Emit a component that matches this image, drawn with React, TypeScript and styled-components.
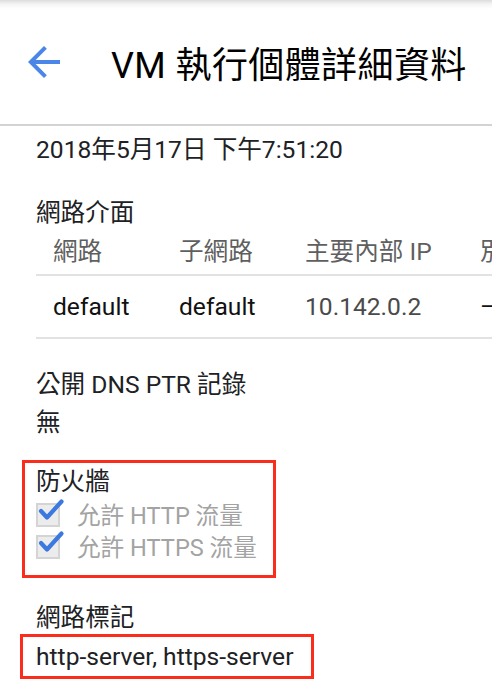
import React from "react";
import styled, { createGlobalStyle } from "styled-components";

const Global = createGlobalStyle`
  html, body { margin: 0; padding: 0; background: #fff; }
  body {
    font-family: Roboto, "Noto Sans CJK TC", "Noto Sans", sans-serif;
    color: #202124;
    overflow: hidden;
    width: 492px;
  }
`;

const Page = styled.div`
  width: 492px;
  height: 688px;
  overflow: hidden;
  background: #fff;
`;

const Header = styled.header`
  height: 124px;
  display: flex;
  align-items: center;
  border-bottom: 2px solid #d3d3d3;
  background: linear-gradient(to bottom, #dcdcdc 0px, #f4f4f4 4px, #ffffff 9px);
`;

const BackButton = styled.button`
  width: 48px;
  height: 48px;
  margin-left: 20px;
  padding: 0;
  border: none;
  background: none;
  display: flex;
  align-items: center;
  justify-content: center;
  color: #4a86e8;
`;

const Title = styled.h1`
  margin: 0 0 0 43px;
  font-size: 36px;
  font-weight: 400;
  color: #000;
  white-space: nowrap;
  letter-spacing: 0.4px;
`;

const Content = styled.main`
  padding: 8px 0 0 36px;
`;

const Text = styled.div<{ $mt?: number; $color?: string }>`
  font-size: 24.6px;
  line-height: 32px;
  margin-top: ${(p) => p.$mt ?? 0}px;
  color: ${(p) => p.$color ?? "#202124"};
  white-space: nowrap;
`;

const Table = styled.div`
  display: grid;
  grid-template-columns: 126px 126px 175px 200px;
  overflow: hidden;
  width: 456px;
`;

const HeadCell = styled.div`
  height: 45px;
  display: flex;
  align-items: center;
  padding-left: 17px;
  font-size: 24.6px;
  line-height: 32px;
  color: #5f5f5f;
  border-bottom: 2px solid #e2e2e2;
  white-space: nowrap;
`;

const Cell = styled.div<{ $muted?: boolean }>`
  height: 61px;
  display: flex;
  align-items: center;
  padding-left: 17px;
  font-size: 24.6px;
  line-height: 32px;
  color: ${(p) => (p.$muted ? "#4a4a4a" : "#111")};
  border-bottom: 2px solid #e2e2e2;
  white-space: nowrap;
`;

const Highlight = styled.div<{ $ml: number; $pl: number; $pt: number; $pb: number; $w: number; $mt: number }>`
  margin-left: -${(p) => p.$ml}px;
  margin-top: ${(p) => p.$mt}px;
  width: ${(p) => p.$w}px;
  box-sizing: border-box;
  border: 3px solid #fa2c1c;
  padding: ${(p) => p.$pt}px 0 ${(p) => p.$pb}px ${(p) => p.$pl}px;
`;

const CheckRow = styled.label`
  display: flex;
  align-items: center;
  height: 32px;
  font-size: 23.6px;
  color: #a3a3a3;
  white-space: nowrap;
`;

const CheckBox = styled.span`
  position: relative;
  width: 20px;
  height: 20px;
  margin-right: 17px;
  background: #ececec;
  border: 2px solid #d4d4d4;
  flex: none;
  top: 1px;
`;

const CheckMark = styled.svg`
  position: absolute;
  left: 0px;
  top: -7px;
`;

function Checked({ label }: { label: string }) {
  return (
    <CheckRow>
      <CheckBox>
        <CheckMark width="27" height="25" viewBox="0 0 27 25">
          <path d="M3 13 L9 19.5 L23.5 3.5" fill="none" stroke="#3b78e0" strokeWidth="4.2" strokeLinecap="round" strokeLinejoin="round" />
        </CheckMark>
      </CheckBox>
      {label}
    </CheckRow>
  );
}

export default function App() {
  return (
    <Page>
      <Global />
      <Header>
        <BackButton aria-label="back">
          <svg width="48" height="48" viewBox="0 0 24 24">
            <path fill="currentColor" d="M20 11H7.83l5.59-5.59L12 4l-8 8 8 8 1.41-1.41L7.83 13H20v-2z" />
          </svg>
        </BackButton>
        <Title>VM 執行個體詳細資料</Title>
      </Header>
      <Content>
        <Text>2018年5月17日 下午7:51:20</Text>
        <Text $mt={31}>網路介面</Text>
        <Table>
          <HeadCell>網路</HeadCell>
          <HeadCell>子網路</HeadCell>
          <HeadCell>主要內部 IP</HeadCell>
          <HeadCell>別名 IP 範圍</HeadCell>
          <Cell>default</Cell>
          <Cell>default</Cell>
          <Cell $muted>10.142.0.2</Cell>
          <Cell>–</Cell>
        </Table>
        <Text $mt={30}>公開 DNS PTR 記錄</Text>
        <Text $mt={6}>無</Text>
        <Highlight $ml={14} $pl={11} $pt={3} $pb={13} $w={254} $mt={21}>
          <Text>防火牆</Text>
          <Checked label="允許 HTTP 流量" />
          <Checked label="允許 HTTPS 流量" />
        </Highlight>
        <Text $mt={24}>網路標記</Text>
        <Highlight $ml={16} $pl={13} $pt={4} $pb={3} $w={294} $mt={0}>
          <Text>http-server, https-server</Text>
        </Highlight>
      </Content>
    </Page>
  );
}
